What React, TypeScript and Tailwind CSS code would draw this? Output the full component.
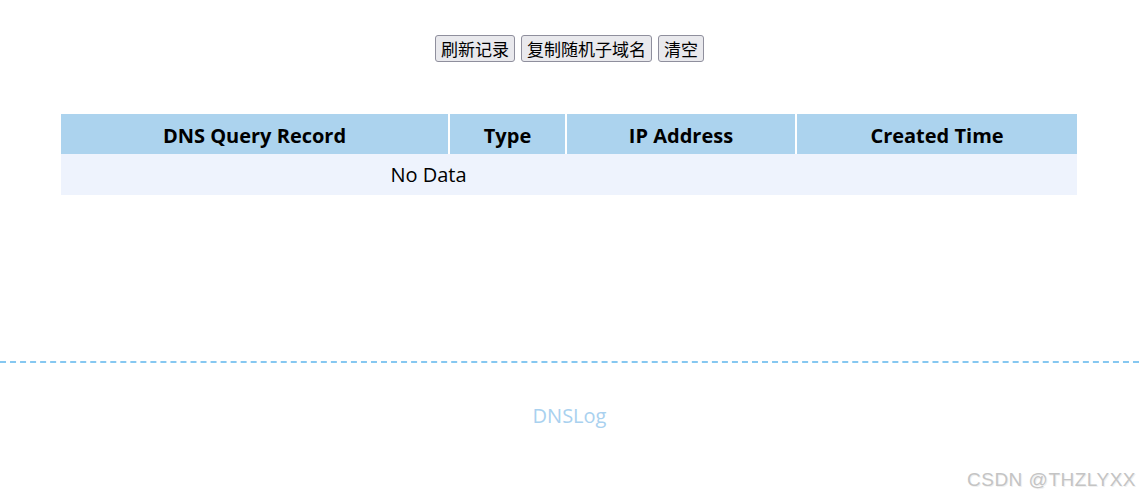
import React from "react";

export default function App() {
  const font = { fontFamily: '"Open Sans", "Noto Sans CJK SC", sans-serif' };
  return (
    <div className="relative w-[1139px] h-[502px] bg-white overflow-hidden" style={font}>
      <div className="flex justify-center gap-[6px] pt-[35px]">
        {["刷新记录", "复制随机子域名", "清空"].map((t) => (
          <button
            key={t}
            className="h-[27px] px-[5px] text-[17px] leading-none text-black bg-[#e9e9ed] border border-[#8f8f9d] rounded-[3px]"
            style={{ fontFamily: '"Noto Sans CJK SC", sans-serif' }}
          >
            {t}
          </button>
        ))}
      </div>
      <div className="mt-[52px] px-[61px] pr-[62px]">
        <table className="w-full border-collapse text-[20px]">
          <thead>
            <tr className="bg-[#acd3ee] h-[40px]">
              <th className="w-[388px] pt-[3px] font-bold border-r-2 border-white">DNS Query Record</th>
              <th className="w-[117px] pt-[3px] font-bold border-r-2 border-white">Type</th>
              <th className="w-[230px] pt-[3px] font-bold border-r-2 border-white">IP Address</th>
              <th className="pt-[3px] font-bold">Created Time</th>
            </tr>
          </thead>
          <tbody>
            <tr className="bg-[#eef3fd] h-[41px]">
              <td colSpan={3} className="text-center">No Data</td>
              <td></td>
            </tr>
          </tbody>
        </table>
      </div>
      <div className="mt-[166px] border-t-2 border-dashed border-[#86c8f1]" />
      <div className="mt-[38px] text-center text-[20px] text-[#a9d1ef]">DNSLog</div>
      <div
        className="absolute right-[3px] bottom-[8px] text-[19px] font-normal text-[#c4c4c4] tracking-[0.5px]"
        style={{ fontFamily: '"Liberation Sans", sans-serif', textShadow: "1px 1px 0 #f0f0f0" }}
      >
        CSDN @THZLYXX
      </div>
    </div>
  );
}
